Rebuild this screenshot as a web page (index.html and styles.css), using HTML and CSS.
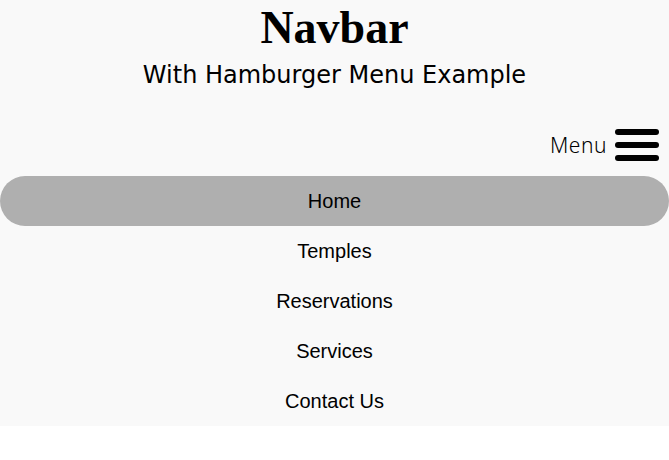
FILE: index.html
```html
<!DOCTYPE html>
<html>
<head>
<meta charset="utf-8">
<link rel="stylesheet" href="styles.css">
</head>
<body>
<div class="page">
  <header class="header">
    <h1 class="title">Navbar</h1>
    <h2 class="subtitle">With Hamburger Menu Example</h2>
  </header>
  <div class="menu-row">
    <span class="menu-label">Menu</span>
    <span class="burger"><span></span><span></span><span></span></span>
  </div>
  <nav class="nav">
    <a class="nav-item active">Home</a>
    <a class="nav-item">Temples</a>
    <a class="nav-item">Reservations</a>
    <a class="nav-item">Services</a>
    <a class="nav-item">Contact Us</a>
  </nav>
</div>
</body>
</html>
```
FILE: styles.css
```css
html, body {
  margin: 0;
  padding: 0;
  background: #ffffff;
}
.page {
  background: #f9f9f9;
  color: #000;
}
.header {
  text-align: center;
  padding-top: 2px;
}
.title {
  margin: 0;
  font-family: "Liberation Serif", "DejaVu Serif", serif;
  font-weight: bold;
  font-size: 46px;
  line-height: 52px;
}
.subtitle {
  margin: 0;
  font-family: "DejaVu Sans", "Noto Sans", sans-serif;
  font-weight: normal;
  font-size: 24px;
  line-height: 42px;
}
.menu-row {
  display: flex;
  justify-content: flex-end;
  align-items: center;
  gap: 8px;
  padding: 33px 10px 15px 0;
}
.menu-label {
  font-family: "Noto Sans", "DejaVu Sans", sans-serif;
  font-weight: 300;
  font-size: 21px;
  line-height: 24px;
  letter-spacing: 0.5px;
}
.burger {
  display: flex;
  flex-direction: column;
  gap: 7px;
}
.burger span {
  display: block;
  width: 44px;
  height: 6px;
  border-radius: 3px;
  background: #000;
}
.nav {
  display: flex;
  flex-direction: column;
}
.nav-item {
  display: block;
  height: 50px;
  line-height: 50px;
  text-align: center;
  font-family: "Liberation Sans", Arial, sans-serif;
  font-size: 20px;
  color: #000;
}
.nav-item.active {
  background: #afafaf;
  border-radius: 25px;
}
```
